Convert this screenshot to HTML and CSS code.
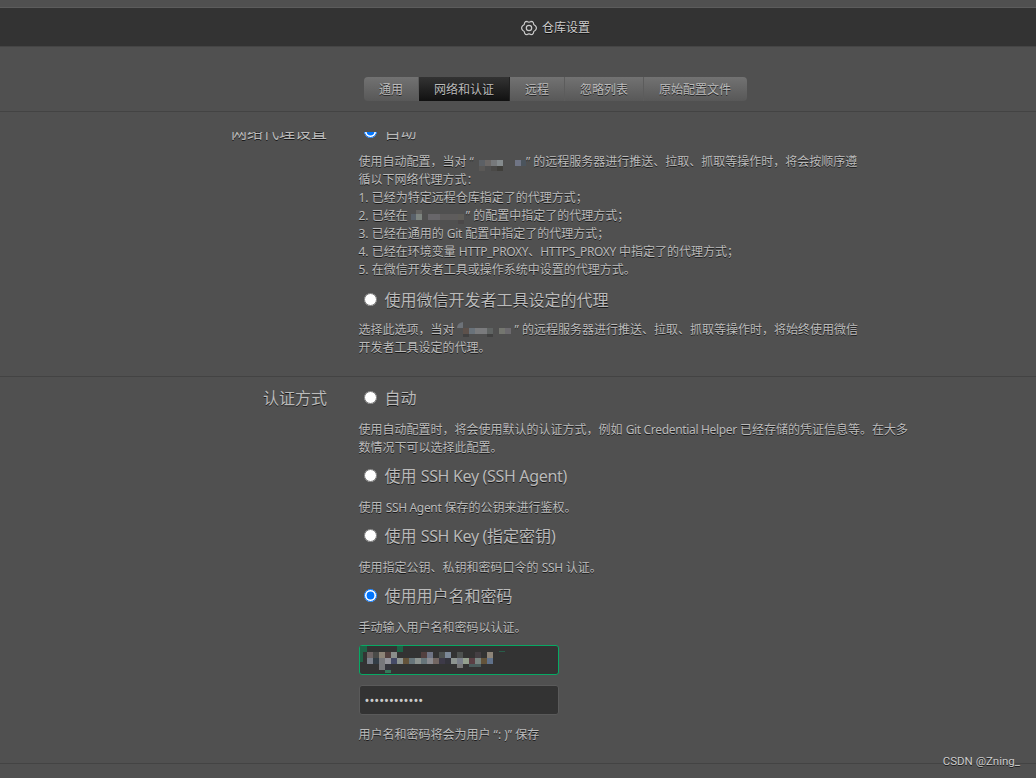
FILE: index.html
```
<!DOCTYPE html>
<html lang="zh-CN">
<head>
    <meta charset="UTF-8">
    <title>仓库设置</title>
    <link rel="stylesheet" href="styles.css">
</head>
<body>
    <header class="title-bar">
        <svg class="gear" width="16" height="16" viewBox="0 0 16 16">
            <path d="M4.6 1.6 L6 1.4 Q8 3 10 1.4 L11.4 1.6 L12.3 2.6 Q12.2 5 14.4 5.8 L15.3 7.2 V8.8 L14.4 10.2 Q12.2 11 12.3 13.4 L11.4 14.4 L10 14.6 Q8 13 6 14.6 L4.6 14.4 L3.7 13.4 Q3.8 11 1.6 10.2 L.7 8.8 V7.2 L1.6 5.8 Q3.8 5 3.7 2.6 Z"/>
            <circle cx="8" cy="8" r="2.7"/>
        </svg>
        <span>仓库设置</span>
    </header>
    <nav class="toolbar">
        <div class="tabs">
            <button class="tab">通用</button>
            <button class="tab active">网络和认证</button>
            <button class="tab">远程</button>
            <button class="tab">忽略列表</button>
            <button class="tab">原始配置文件</button>
        </div>
    </nav>
    <main class="scroll">
        <section class="group proxy">
            <h2>网络代理设置</h2>
            <div class="options">
                <label><input type="radio" name="proxy" checked>自动</label>
                <p>使用自动配置，当对 “<svg class="mask" width="52" height="18"><path fill="#5c6065" d="M5 7h6v6H5z"/><path fill="#6c6866" d="M11 7h6v6h-6z"/><path fill="#77797b" d="M17 7h6v6h-6z"/><path fill="#858b8d" d="M23 7h6v6h-6z"/><path fill="#5a5856" d="M5 13h6v5H5z"/><path fill="#4a4947" d="M17 13h6v5h-6z"/><path fill="#403f3b" d="M23 13h6v5h-6z"/><path fill="#707585" d="M41 7h6v6h-6z"/><path fill="#4b545d" d="M47 7h5v6h-5z"/></svg>” 的远程服务器进行推送、拉取、抓取等操作时，将会按顺序遵<br>
                循以下网络代理方式：<br>
                1. 已经为特定远程仓库指定了的代理方式；<br>
                2. 已经在 <svg class="mask" width="55" height="18"><path fill="#59616a" d="M0 7h5v6H0z"/><path fill="#666563" d="M5 3h6v4H5z"/><path fill="#7e8580" d="M5 7h6v6H5z"/><path fill="#68666a" d="M17 7h12v6H17z"/><path fill="#5e5c5c" d="M29 7h18v6H29z"/><path fill="#5f5d58" d="M47 7h6v6h-6z"/><path fill="#4b4849" d="M47 13h6v4h-6z"/></svg>” 的配置中指定了的代理方式；<br>
                3. 已经在通用的 <span class="en">Git</span> 配置中指定了的代理方式；<br>
                4. 已经在环境变量 <span class="en">HTTP_PROXY</span>、<span class="en">HTTPS_PROXY</span> 中指定了的代理方式；<br>
                5. 在微信开发者工具或操作系统中设置的代理方式。</p>
                <label><input type="radio" name="proxy">使用微信开发者工具设定的代理</label>
                <p>选择此选项，当对<svg class="mask" width="60" height="18"><path fill="#6d7278" d="M2 7q0-5 6-6v6z"/><path fill="#5d514b" d="M8 7h6v6H8z"/><path fill="#69727a" d="M14 7h6v6h-6z"/><path fill="#7a7b7d" d="M20 7h12v6H20z"/><path fill="#5f6362" d="M32 7h6v6h-6z"/><path fill="#74766f" d="M44 7h6v6h-6z"/><path fill="#6c6a6e" d="M50 7h6v6h-6z"/><path fill="#414141" d="M8 13h6v3H8zM32 13h6v3h-6z"/></svg>” 的远程服务器进行推送、拉取、抓取等操作时，将始终使用微信<br>
                开发者工具设定的代理。</p>
            </div>
        </section>
        <section class="group auth">
            <h2>认证方式</h2>
            <div class="options">
                <label><input type="radio" name="auth">自动</label>
                <p>使用自动配置时，将会使用默认的认证方式，例如 <span class="en">Git Credential Helper</span> 已经存储的凭证信息等。在大多<br>
                数情况下可以选择此配置。</p>
                <label><input type="radio" name="auth"><span>使用 <span class="en">SSH Key (SSH Agent)</span></span></label>
                <p>使用 <span class="en">SSH Agent</span> 保存的公钥来进行鉴权。</p>
                <label><input type="radio" name="auth"><span>使用 <span class="en">SSH Key (</span>指定密钥)</span></label>
                <p>使用指定公钥、私钥和密码口令的 <span class="en">SSH</span> 认证。</p>
                <label><input type="radio" name="auth" checked>使用用户名和密码</label>
                <p>手动输入用户名和密码以认证。</p>
                <div class="field focus">
                    <svg width="160" height="28" shape-rendering="crispEdges">
                        <path fill="#1f6246" d="M0 0h7v6H3v10H0zM37 0h6v6h-6z"/>
                        <path fill="#35785a" d="M25 24h6v3h-6z"/>
                        <path fill="#285d49" d="M139 5h6v1h-6z"/>
                        <path fill="#6e6464" d="M7 6h6v6H7z"/>
                        <path fill="#4a4a48" d="M13 6h6v6h-6z"/>
                        <path fill="#8d8478" d="M19 6h6v6h-6zM127 6h6v6h-6z"/>
                        <path fill="#52403f" d="M25 6h6v6h-6zM61 6h6v6h-6z"/>
                        <path fill="#8b8e8b" d="M31 6h6v6h-6z"/>
                        <path fill="#6f7484" d="M67 6h6v6h-6z"/>
                        <path fill="#4e5250" d="M79 6h6v6h-6zM97 6h6v6h-6z"/>
                        <path fill="#7c8897" d="M85 6h6v6h-6z"/>
                        <path fill="#443f43" d="M115 6h6v6h-6z"/>
                        <path fill="#7a7f8a" d="M7 12h6v6H7zM97 12h6v6h-6z"/>
                        <path fill="#333d46" d="M13 12h6v6h-6z"/>
                        <path fill="#77777b" d="M19 12h6v12h-6z"/>
                        <path fill="#94939a" d="M25 12h6v6h-6z"/>
                        <path fill="#454a66" d="M31 12h6v6h-6z"/>
                        <path fill="#8d9490" d="M37 12h6v6h-6zM55 12h6v6h-6zM91 12h6v6h-6z"/>
                        <path fill="#63533a" d="M43 12h6v6h-6zM121 12h6v6h-6z"/>
                        <path fill="#67757a" d="M49 12h6v6h-6zM61 12h6v6h-6z"/>
                        <path fill="#8b8b90" d="M67 12h6v6h-6z"/>
                        <path fill="#726662" d="M73 12h6v6h-6z"/>
                        <path fill="#3d3a48" d="M79 12h6v6h-6z"/>
                        <path fill="#34343c" d="M85 12h6v6h-6zM25 18h6v6h-6z"/>
                        <path fill="#94a08e" d="M103 12h6v6h-6z"/>
                        <path fill="#5a3f44" d="M109 12h6v6h-6z"/>
                        <path fill="#788480" d="M115 12h6v6h-6z"/>
                        <path fill="#60718a" d="M127 12h6v6h-6z"/>
                        <path fill="#787878" d="M97 18h6v4h-6z"/>
                        <path fill="#4b5c5c" d="M109 18h12v3h-12z"/>
                    </svg>
                </div>
                <input class="field password" type="password" value="abcdefghijkl">
                <p class="note">用户名和密码将会为用户 “: )” 保存</p>
            </div>
        </section>
    </main>
    <div class="watermark">CSDN @Zning_</div>
</body>
</html>
```
FILE: styles.css
```
* {
    box-sizing: border-box;
}
body {
    margin: 0;
    height: 778px;
    overflow: hidden;
    display: flex;
    flex-direction: column;
    background: #505050;
    color: #bbb;
    font: 12px/18px "Noto Sans", "Noto Sans CJK SC", sans-serif;
    text-shadow: 0 1px 0 rgba(0, 0, 0, .7);
}
.title-bar {
    height: 40px;
    margin-top: 7px;
    border-top: 1px solid #5c5c5c;
    border-bottom: 1px solid #454545;
    background: #333;
    color: #ccc;
    display: flex;
    align-items: center;
    justify-content: center;
    gap: 5px;
    padding: 1px 0 0 75px;
}
.gear {
    margin-top: 1px;
    fill: none;
    stroke: #ccc;
    stroke-width: 1.2;
}
.toolbar {
    height: 65px;
    padding: 30px 0 0 364px;
    border-bottom: 1px solid #434343;
}
.tabs {
    display: inline-flex;
    height: 24px;
    border-radius: 4px;
    overflow: hidden;
}
.tab {
    height: 24px;
    padding: 2px 15px 0;
    border: 0;
    border-right: 1px solid #5c5c5c;
    background: linear-gradient(#727272, #585858);
    color: #bbb;
    font: inherit;
    text-shadow: inherit;
}
.tab:last-child {
    padding-right: 16px;
    border-right: 0;
}
.tab.active {
    background: linear-gradient(#333, #111);
    border-color: #222;
}
.scroll {
    flex: 1;
    margin-top: 20px;
    overflow: hidden;
}
.group {
    display: flex;
    border-bottom: 1px solid #434343;
}
.group h2 {
    width: 327px;
    margin: 0 31.5px 0 0;
    text-align: right;
    font-size: 16px;
    font-weight: normal;
    line-height: 24px;
}
.proxy {
    margin-top: -12px;
    padding-bottom: 10px;
}
.auth {
    padding: 9px 0 12px;
}
.options {
    white-space: nowrap;
}
label {
    display: flex;
    align-items: center;
    height: 24px;
    font-size: 16px;
    line-height: 24px;
}
input[type="radio"] {
    width: 13px;
    height: 13px;
    margin: 0 7.5px 2px 5.5px;
}
p {
    margin: 9px 0;
}
.auth p {
    margin: 11px 0 7px;
}
.en {
    letter-spacing: -.33px;
}
.mask {
    vertical-align: top;
}
.field {
    display: block;
    width: 200px;
    height: 30px;
    border: 1px solid #5a5a5a;
    border-radius: 3px;
    background: #333;
    color: #ccc;
}
.field.focus {
    border-color: #07a964;
    margin: 8px 0 10px;
}
.field svg {
    display: block;
}
.password {
    padding: 0 5px;
    font: 13px "Noto Sans", sans-serif;
}
.watermark {
    position: absolute;
    right: 16px;
    bottom: 8px;
    font: 11.5px/18px Roboto, sans-serif;
    color: #ccc;
}
```
